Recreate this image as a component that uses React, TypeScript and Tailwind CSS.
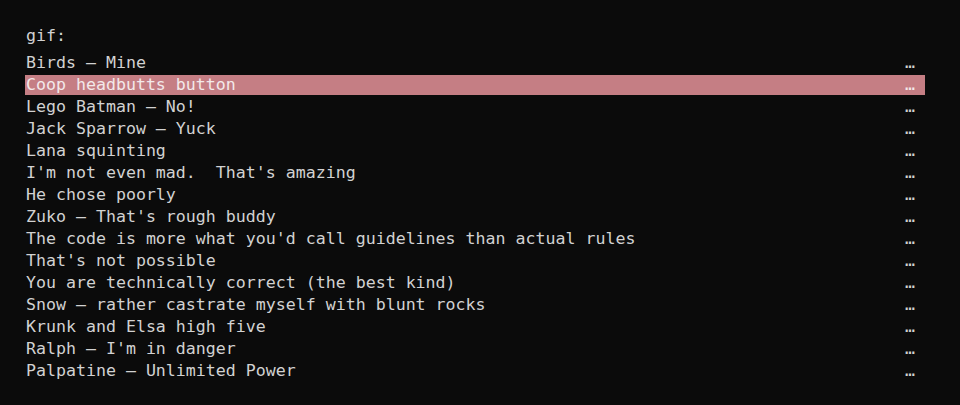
const GIFS = [
  'Birds – Mine',
  'Coop headbutts button',
  'Lego Batman – No!',
  'Jack Sparrow – Yuck',
  'Lana squinting',
  "I'm not even mad.  That's amazing",
  'He chose poorly',
  "Zuko – That's rough buddy",
  "The code is more what you'd call guidelines than actual rules",
  "That's not possible",
  'You are technically correct (the best kind)',
  'Snow – rather castrate myself with blunt rocks',
  'Krunk and Elsa high five',
  "Ralph – I'm in danger",
  'Palpatine – Unlimited Power',
]

const SELECTED = 1

export default function App() {
  return (
    <div className="w-[960px] h-[405px] bg-[#0b0b0b] text-[#d2d2d2] font-['DejaVu_Sans_Mono',monospace] text-[16.6px] leading-[20px] overflow-hidden">
      <div className="ml-[25px] w-[900px] pt-[26px]">
        <div className="h-[20px] whitespace-pre mb-[7px] pl-px">gif:</div>
        <div className="flex flex-col gap-[2px]">
          {GIFS.map((name, i) => (
            <div
              key={name}
              className={`h-[20px] flex justify-between items-center whitespace-pre pl-px pr-[10px] ${
                i === SELECTED ? 'bg-[#c57e84] text-[#f3e9ea]' : ''
              }`}
            >
              <span>{name}</span>
              <span>…</span>
            </div>
          ))}
        </div>
      </div>
    </div>
  )
}
